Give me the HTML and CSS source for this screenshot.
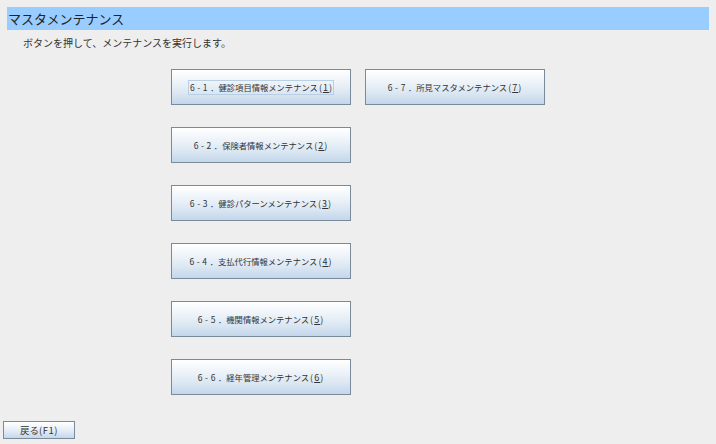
FILE: index.html
```html
<!DOCTYPE html>
<html lang="ja">
<head>
<meta charset="utf-8">
<title>マスタメンテナンス</title>
<link rel="stylesheet" href="styles.css">
</head>
<body>
<div class="page">
  <div class="header">マスタメンテナンス</div>
  <div class="lead">ボタンを押して、メンテナンスを実行します。</div>
  <div class="grid">
    <button class="btn c1"><span class="focus"><span class="num">6-1</span>．健診項目情報メンテナンス<span class="key">(<u>1</u>)</span></span></button>
    <button class="btn c2"><span class="num">6-7</span>．所見マスタメンテナンス<span class="key">(<u>7</u>)</span></button>
    <button class="btn c1"><span class="num">6-2</span>．保険者情報メンテナンス<span class="key">(<u>2</u>)</span></button>
    <button class="btn c1"><span class="num">6-3</span>．健診パターンメンテナンス<span class="key">(<u>3</u>)</span></button>
    <button class="btn c1"><span class="num">6-4</span>．支払代行情報メンテナンス<span class="key">(<u>4</u>)</span></button>
    <button class="btn c1"><span class="num">6-5</span>．機関情報メンテナンス<span class="key">(<u>5</u>)</span></button>
    <button class="btn c1"><span class="num">6-6</span>．経年管理メンテナンス<span class="key">(<u>6</u>)</span></button>
  </div>
  <div class="footer">
    <button class="btn back">戻る<span class="fkey">(F1)</span></button>
  </div>
</div>
</body>
</html>
```

FILE: styles.css
```css
html, body {
  margin: 0;
  padding: 0;
  background: #eeeeee;
}
body {
  font-family: "Noto Sans CJK JP", "Noto Sans", sans-serif;
  color: #333333;
}
.page {
  width: 716px;
  height: 444px;
  display: flex;
  flex-direction: column;
}
.header {
  margin: 7px 7px 0 7px;
  height: 23px;
  background: #99ccff;
  font-size: 13px;
  line-height: 23px;
  padding-left: 1px;
  color: #222222;
}
.lead {
  margin: 6px 0 0 23px;
  font-size: 10px;
  line-height: 14px;
  height: 14px;
}
.grid {
  margin: 19px 0 0 171px;
  display: grid;
  grid-template-columns: 180px 180px;
  grid-auto-rows: 36px;
  column-gap: 14px;
  row-gap: 22px;
}
.c1 { grid-column: 1; }
.c2 { grid-column: 2; grid-row: 1; }
.btn {
  box-sizing: border-box;
  margin: 0;
  padding: 0;
  border: 1px solid #7a8a99;
  border-radius: 0;
  background: linear-gradient(#ffffff 0%, #f3f7fb 25%, #dde8f3 65%, #c3d7eb 100%);
  font-family: "Noto Sans CJK JP", "Noto Sans", sans-serif;
  font-size: 8.3px;
  color: #333333;
  display: flex;
  align-items: center;
  justify-content: center;
  white-space: nowrap;
}
.num {
  font-size: 8.5px;
  letter-spacing: 2.6px;
}
.key {
  font-size: 9px;
  letter-spacing: 1px;
  margin-left: 1px;
}
.btn u {
  text-underline-offset: 1px;
}
.focus {
  border: 1px solid #b8cfe5;
  padding: 1px 0 1px 1px;
  line-height: 11px;
}
.footer {
  margin-top: auto;
  margin-bottom: 5px;
  padding-left: 3px;
}
.back {
  width: 72px;
  height: 18px;
  font-size: 9.5px;
}
.fkey {
  font-size: 9.5px;
  letter-spacing: 0.5px;
}
```
